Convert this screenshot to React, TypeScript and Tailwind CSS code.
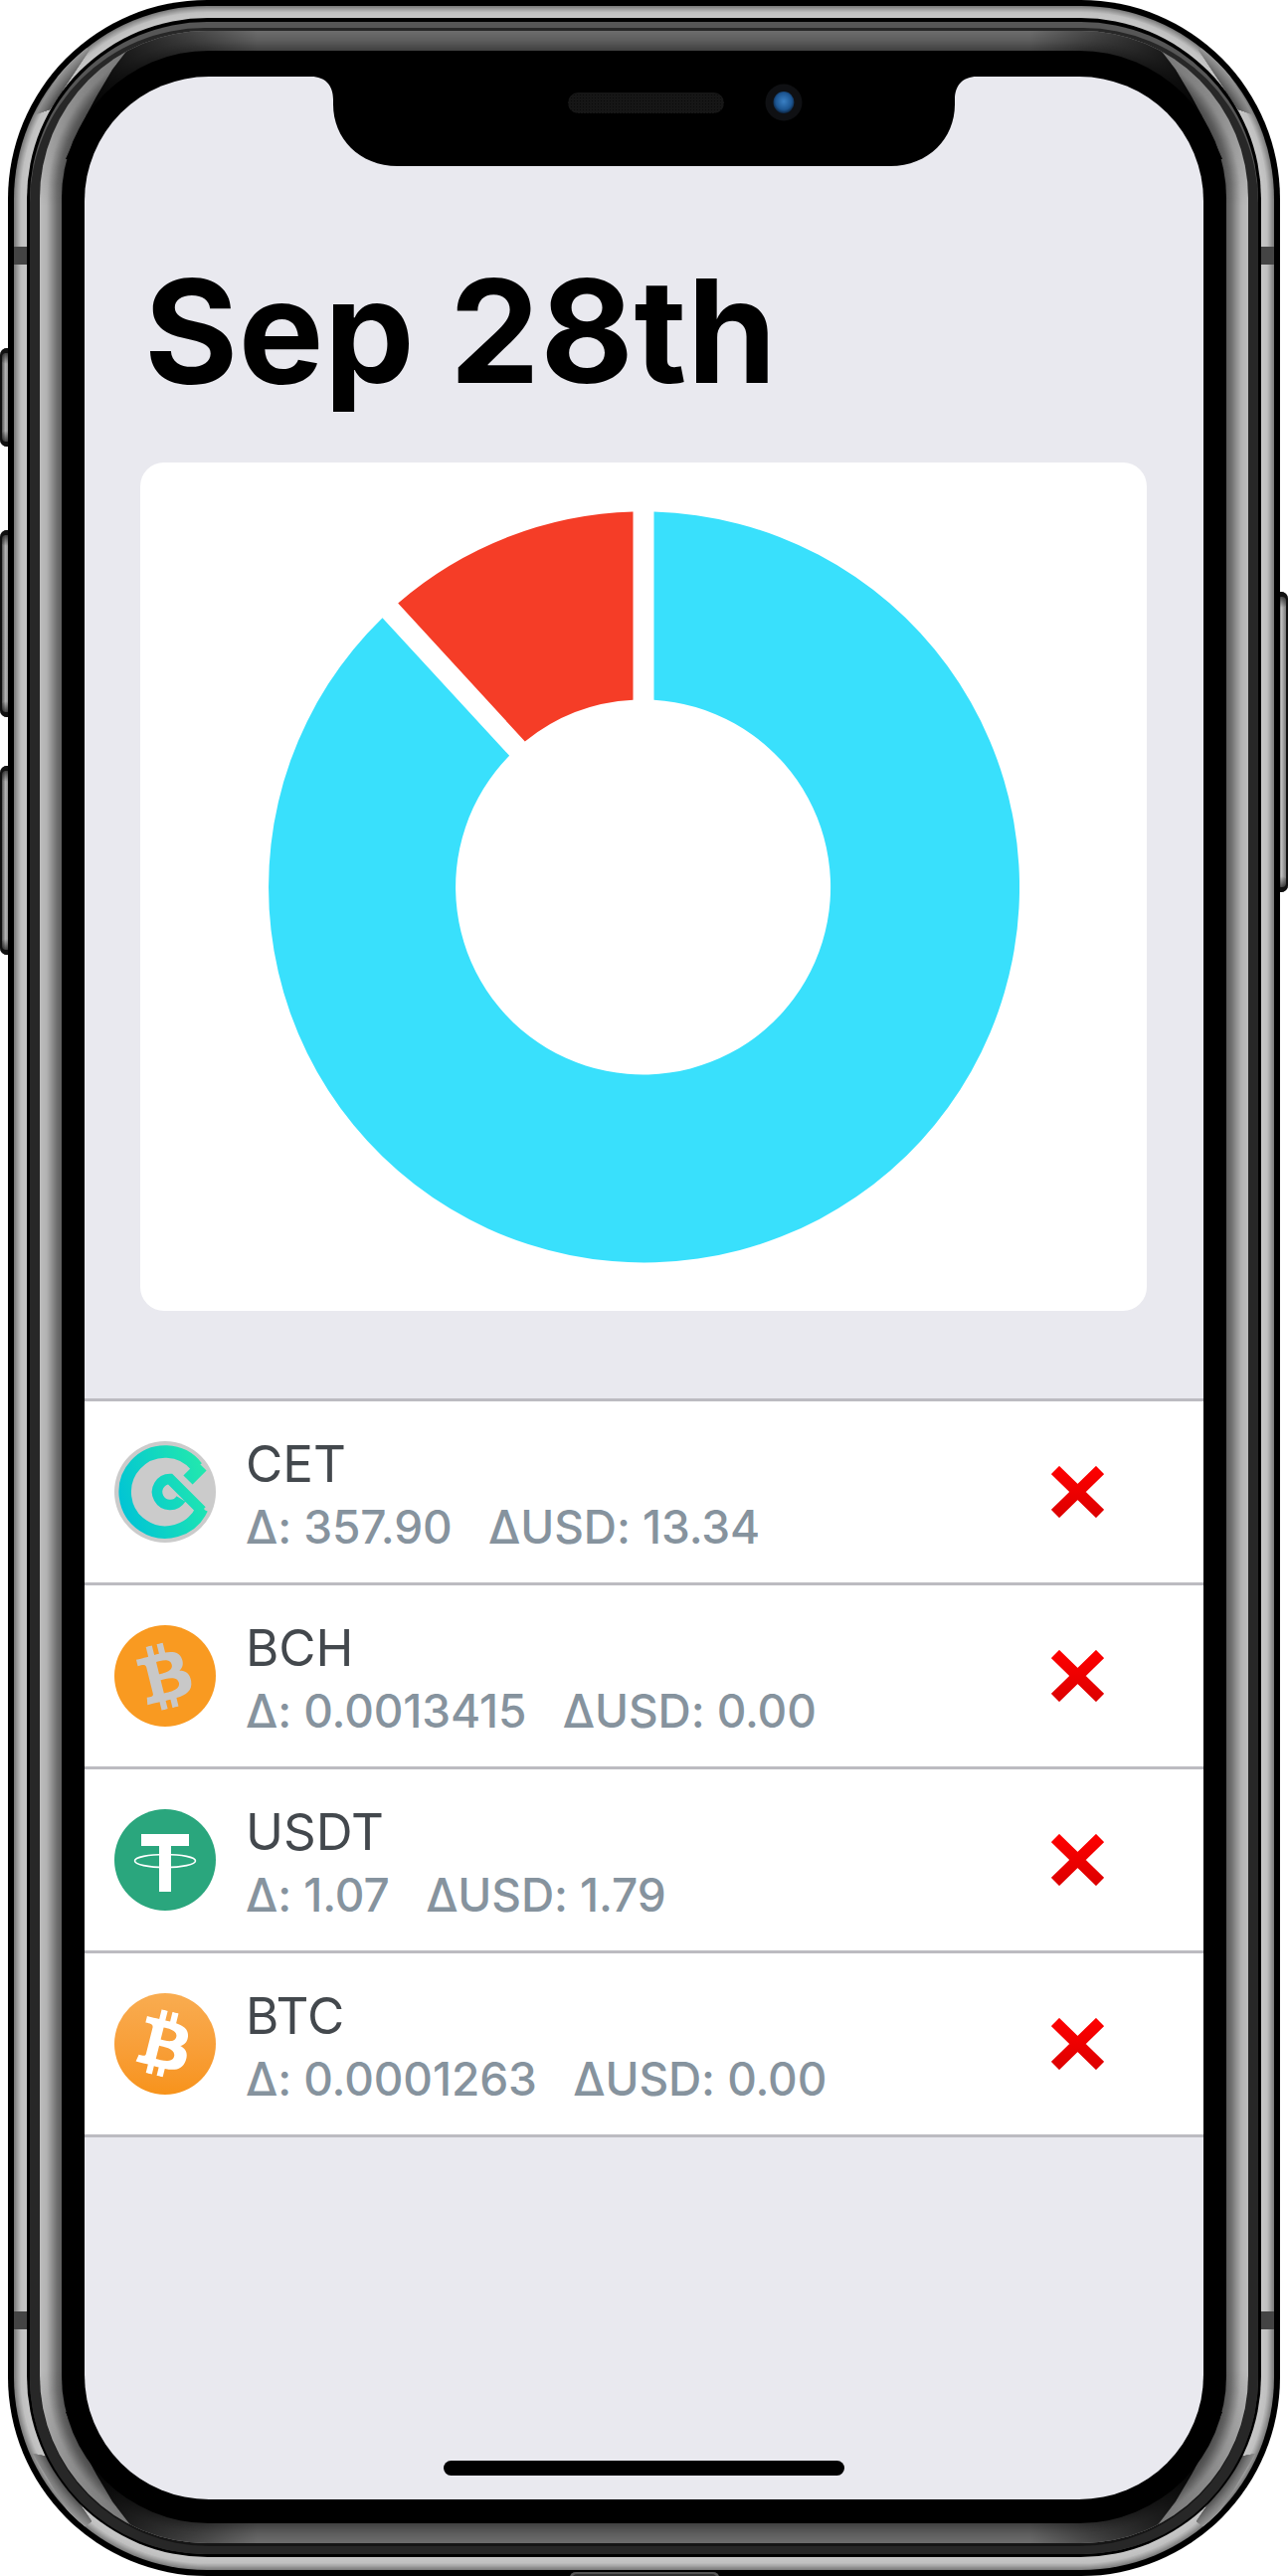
import React from 'react';
import { FaBtc } from 'react-icons/fa';

type Box = { l: number; t: number; r: number; b: number; rx: number };

// interpolate between two rounded rects, so a gradient follows the phone's corners
const lerp = (a: number, b: number, k: number) => a + (b - a) * k;
const hex = (v: number) => `rgb(${Math.round(v)},${Math.round(v)},${Math.round(v)})`;

const Band = ({ from, to, stops, n }: { from: Box; to: Box; stops: [number, number][]; n: number }) => {
  const shade = (k: number) => {
    for (let i = 1; i < stops.length; i++) {
      if (k <= stops[i][0]) {
        const [k0, v0] = stops[i - 1];
        const [k1, v1] = stops[i];
        return lerp(v0, v1, (k - k0) / (k1 - k0));
      }
    }
    return stops[stops.length - 1][1];
  };
  return (
    <>
      {Array.from({ length: n }).map((_, i) => {
        const k = i / (n - 1);
        const l = lerp(from.l, to.l, k);
        const t = lerp(from.t, to.t, k);
        const r = lerp(from.r, to.r, k);
        const b = lerp(from.b, to.b, k);
        return <rect key={i} x={l} y={t} width={r - l} height={b - t} rx={lerp(from.rx, to.rx, k)} fill={hex(shade(k))} />;
      })}
    </>
  );
};

const Rounded = ({ box, fill }: { box: Box; fill: string }) => (
  <rect x={box.l} y={box.t} width={box.r - box.l} height={box.b - box.t} rx={box.rx} fill={fill} />
);

const R0: Box = { l: 8, t: 0, r: 1287, b: 2590, rx: 200 };
const R1: Box = { l: 14, t: 6, r: 1281, b: 2584, rx: 194 };
const R2: Box = { l: 27, t: 18, r: 1268, b: 2571, rx: 182 };
const R3: Box = { l: 30, t: 22, r: 1265, b: 2568, rx: 178 };
const R3b: Box = { l: 30, t: 28, r: 1265, b: 2568, rx: 176 };
const R3c: Box = { l: 40, t: 31, r: 1255, b: 2560, rx: 170 };
const R4: Box = { l: 40, t: 31, r: 1255, b: 2557, rx: 168 };
const R5: Box = { l: 62, t: 51, r: 1233, b: 2537, rx: 148 };

const SideButton = ({ x, y, w, h, flip }: { x: number; y: number; w: number; h: number; flip?: boolean }) => (
  <g>
    <rect x={x} y={y} width={w} height={h} rx={7} fill="#111" />
    <rect x={x + (flip ? 3 : 2)} y={y + 5} width={w - 5} height={h - 10} rx={4} fill={flip ? 'url(#btnR)' : 'url(#btnL)'} />
    <rect x={x} y={y} width={w} height={16} rx={7} fill="url(#btnTop)" />
    <rect x={x} y={y + h - 16} width={w} height={16} rx={7} fill="url(#btnBottom)" />
  </g>
);

// the phone around the screen, drawn behind it
const PhoneBezel = () => (
  <svg className="absolute inset-0" width={1295} height={2590} viewBox="0 0 1295 2590">
    <defs>
      <linearGradient id="btnL" x1="0" x2="1" y1="0" y2="0">
        <stop offset="0" stopColor="#555" />
        <stop offset="0.4" stopColor="#b5b5b5" />
        <stop offset="1" stopColor="#6a6a6a" />
      </linearGradient>
      <linearGradient id="btnR" x1="0" x2="1" y1="0" y2="0">
        <stop offset="0" stopColor="#333" />
        <stop offset="0.5" stopColor="#bdbdbd" />
        <stop offset="1" stopColor="#777" />
      </linearGradient>
      <linearGradient id="btnTop" x1="0" x2="0" y1="0" y2="1">
        <stop offset="0" stopColor="#111" />
        <stop offset="1" stopColor="#111" stopOpacity="0" />
      </linearGradient>
      <linearGradient id="btnBottom" x1="0" x2="0" y1="0" y2="1">
        <stop offset="0" stopColor="#111" stopOpacity="0" />
        <stop offset="1" stopColor="#111" />
      </linearGradient>
      <linearGradient id="cornerFade" gradientUnits="userSpaceOnUse" x1="0" y1="0" x2="1295" y2="0">
        <stop offset="0.07" stopColor="#000" stopOpacity="0.95" />
        <stop offset="0.2" stopColor="#000" stopOpacity="0" />
        <stop offset="0.8" stopColor="#000" stopOpacity="0" />
        <stop offset="0.93" stopColor="#000" stopOpacity="0.95" />
      </linearGradient>
      {/* side highlight dims as it runs into the corners */}
      <linearGradient id="sideDim" gradientUnits="userSpaceOnUse" x1="0" y1="0" x2="0" y2="2590">
        <stop offset="0.02" stopColor="#000" stopOpacity="0.35" />
        <stop offset="0.08" stopColor="#000" stopOpacity="0" />
        <stop offset="0.92" stopColor="#000" stopOpacity="0" />
        <stop offset="0.98" stopColor="#000" stopOpacity="0.35" />
      </linearGradient>
      <clipPath id="topBottom">
        <polygon points="164,7 129,49 113,70 97,97 83,123 66,160 1229,160 1212,123 1198,97 1182,70 1166,49 1131,7" />
        <polygon points="164,2578 129,2536 113,2515 97,2488 83,2462 66,2425 1229,2425 1212,2462 1198,2488 1182,2515 1166,2536 1131,2578" />
      </clipPath>
      <clipPath id="silverCorners">
        <polygon points="36,115 50,110 90,50 78,42" />
        <polygon points="1259,115 1245,110 1205,50 1217,42" />
        <polygon points="33,2467 48,2470 92,2535 80,2545" />
        <polygon points="1262,2467 1247,2470 1203,2535 1215,2545" />
      </clipPath>
    </defs>

    <SideButton x={0} y={350} w={14} h={99} />
    <SideButton x={0} y={533} w={14} h={188} />
    <SideButton x={0} y={770} w={14} h={190} />
    <SideButton x={1281} y={595} w={14} h={302} flip />
    <Rounded box={R0} fill="#000" />
    <rect x={573} y={2586} width={150} height={10} rx={6} fill="#555" />
    <rect x={575} y={2588} width={146} height={10} rx={5} fill="#2e2e2e" />

    <Band
      from={R1}
      to={R2}
      n={13}
      stops={[
        [0, 126],
        [0.25, 160],
        [0.5, 192],
        [1, 200],
      ]}
    />
    <g clipPath="url(#silverCorners)">
      <Band
        from={R1}
        to={R2}
        n={13}
        stops={[
          [0, 150],
          [0.5, 120],
          [1, 80],
        ]}
      />
    </g>
    {/* antenna lines */}
    <rect x={14} y={248} width={13} height={18} fill="#444" />
    <rect x={1268} y={248} width={13} height={18} fill="#444" />
    <rect x={14} y={2324} width={13} height={18} fill="#444" />
    <rect x={1268} y={2324} width={13} height={18} fill="#444" />

    <Rounded box={R2} fill="#000" />
    <Rounded box={R3} fill="#565656" />
    <Rounded box={R3b} fill="#272727" />
    <Rounded box={R3c} fill="#151515" />
    <Band
      from={R4}
      to={R5}
      n={22}
      stops={[
        [0, 188],
        [0.3, 178],
        [0.75, 112],
        [1, 90],
      ]}
    />
    <Rounded box={R4} fill="url(#sideDim)" />
    <g clipPath="url(#topBottom)">
      <Band
        from={R4}
        to={R5}
        n={20}
        stops={[
          [0, 108],
          [0.5, 92],
          [1, 62],
        ]}
      />
      <Rounded box={R4} fill="url(#cornerFade)" />
    </g>
    <Rounded box={R5} fill="#000" />
  </svg>
);

const ScreenNotch = () => (
  <svg className="absolute top-0 left-[228px]" width={669} height={90} viewBox="0 0 669 90">
    <defs>
      <pattern id="mesh" width="3" height="3" patternUnits="userSpaceOnUse">
        <rect width="3" height="3" fill="#161616" />
        <rect width="1" height="1" fill="#0a0a0a" />
      </pattern>
      <radialGradient id="lens" cx="0.5" cy="0.45" r="0.55">
        <stop offset="0" stopColor="#3a80c4" />
        <stop offset="0.7" stopColor="#1c5591" />
        <stop offset="1" stopColor="#0c2440" />
      </radialGradient>
    </defs>
    <path d="M0,0 C14,0 22,9 22,23 L22,28 C22,62 48,90 87,90 L582,90 C621,90 647,62 647,28 L647,23 C647,9 655,0 669,0 Z" fill="#000" />
    <rect x={258} y={16} width={157} height={21} rx={10.5} fill="url(#mesh)" />
    <circle cx={475} cy={26} r={18.5} fill="#0f1013" />
    <ellipse cx={475} cy={26} rx={10.5} ry={11} fill="url(#lens)" />
  </svg>
);

const Donut = () => (
  <svg width={756} height={756} viewBox="269.5 513.5 756 756">
    <path
      d="M658,514.1 A377.5,377.5 0 1 1 385,620.7 L512.7,759.3 A188.5,188.5 0 1 0 658,703.3 Z"
      fill="#39e0fc"
    />
    <path d="M637,514.1 A377.5,377.5 0 0 0 400.7,606 L528.3,745 A188.5,188.5 0 0 1 637,703.3 Z" fill="#f53d27" />
  </svg>
);

const CetLogo = () => (
  <svg width={102} height={102} viewBox="0 0 102 102">
    <defs>
      <linearGradient id="cetGrad" gradientUnits="userSpaceOnUse" x1="5" y1="70" x2="95" y2="40">
        <stop offset="0" stopColor="#00c3d6" />
        <stop offset="1" stopColor="#22e8ae" />
      </linearGradient>
    </defs>
    <circle cx={51} cy={51} r={51} fill="#cbcbcb" />
    <g fill="none" stroke="url(#cetGrad)" strokeWidth={12.5}>
      <path d="M89,67 L88,68 A40.5,40.5 0 1 1 83,26" />
      <path d="M88,25 L74,39" strokeWidth={13} />
      <path d="M88,70 L56,38 A13,13 0 1 0 67,58" strokeWidth={10.5} />
    </g>
  </svg>
);

const BchLogo = () => (
  <div className="w-[102px] h-[102px] rounded-full bg-[#f99a21] flex items-center justify-center">
    <FaBtc className="text-[#c8c8c8] w-[66px] h-[66px] -rotate-[14deg]" />
  </div>
);

const BtcLogo = () => (
  <div className="w-[102px] h-[102px] rounded-full bg-gradient-to-b from-[#f9ac50] to-[#f7931a] flex items-center justify-center">
    <FaBtc className="text-white w-[66px] h-[66px] rotate-[14deg]" />
  </div>
);

const UsdtLogo = () => (
  <svg width={102} height={102} viewBox="0 0 102 102">
    <circle cx={51} cy={51} r={51} fill="#2aa67d" />
    <rect x={27} y={25} width={48} height={12} fill="#fff" />
    <rect x={45} y={37} width={12} height={46} fill="#fff" />
    <ellipse cx={51} cy={52} rx={30.5} ry={6.5} fill="none" stroke="#fff" strokeWidth={1.6} />
  </svg>
);

const RemoveIcon = () => (
  <svg width={53} height={52} viewBox="0 0 53 52" className="ml-auto mr-[100px] shrink-0">
    <defs>
      <linearGradient id="xGrad" gradientUnits="userSpaceOnUse" x1="0" y1="0" x2="0" y2="52">
        <stop offset="0" stopColor="#ff0000" />
        <stop offset="1" stopColor="#dc0000" />
      </linearGradient>
    </defs>
    <path d="M4,4 L49,48 M49,4 L4,48" stroke="url(#xGrad)" strokeWidth={11.5} fill="none" />
  </svg>
);

const coins = [
  { name: 'CET', delta: '357.90', usd: '13.34', logo: <CetLogo /> },
  { name: 'BCH', delta: '0.0013415', usd: '0.00', logo: <BchLogo /> },
  { name: 'USDT', delta: '1.07', usd: '1.79', logo: <UsdtLogo /> },
  { name: 'BTC', delta: '0.0001263', usd: '0.00', logo: <BtcLogo /> },
];

export default function App() {
  return (
    <div className="relative w-[1295px] h-[2590px] bg-white overflow-hidden pl-[85px] pt-[77px] font-['Inter',sans-serif]">
      <PhoneBezel />
      <div className="relative w-[1125px] h-[2436px] rounded-[125px] overflow-hidden bg-[#e9e9ef] flex flex-col">
        <ScreenNotch />

        <h1 className="mt-[184px] ml-[60px] text-[144px] leading-none font-bold text-black tracking-[0.5px]">Sep 28th</h1>

        <div className="mt-[60px] ml-[56px] w-[1012px] h-[853px] shrink-0 rounded-[24px] bg-white flex items-center justify-center">
          <Donut />
        </div>

        <div className="mt-[88px] border-t-[3px] border-[#bcbbc1]">
          {coins.map((coin) => (
            <div key={coin.name} className="h-[185px] bg-white border-b-[3px] border-[#bcbbc1] flex items-center pl-[30px]">
              <div className="shrink-0">{coin.logo}</div>
              <div className="ml-[30px] pt-[4px] flex flex-col">
                <span className="text-[51px] leading-none text-[#43484d]">{coin.name}</span>
                <span className="mt-[15px] text-[46px] leading-none font-medium text-[#86939e] whitespace-pre tracking-[-0.1px]">
                  {`Δ: ${coin.delta}   ΔUSD: ${coin.usd}`}
                </span>
              </div>
              <RemoveIcon />
            </div>
          ))}
        </div>

        <div className="absolute bottom-[24px] left-[361px] w-[403px] h-[15px] rounded-full bg-black" />
      </div>
    </div>
  );
}
